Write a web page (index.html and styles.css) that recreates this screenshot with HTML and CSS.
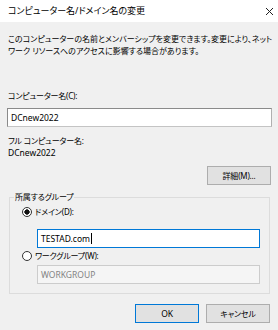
FILE: index.html
```html
<!DOCTYPE html>
<html lang="ja">
<head>
    <meta charset="UTF-8">
    <title>コンピューター名/ドメイン名の変更</title>
    <link rel="stylesheet" href="styles.css">
</head>
<body>
<div class="dlg">
    <div class="dlg-title">
        <span>コンピューター名/ドメイン名の変更</span>
        <svg class="dlg-close" width="9" height="9" viewBox="0 0 9 9">
            <path d="M1 1L8 8M8 1L1 8" stroke="#222" stroke-width="1" fill="none"/>
        </svg>
    </div>
    <div class="dlg-body">
        <p class="desc">このコンピューターの名前とメンバーシップを変更できます。変更により、ネット<br>ワーク リソースへのアクセスに影響する場合があります。</p>

        <div class="lbl lbl-name">コンピューター名(C):</div>
        <div class="txt txt-name lat">DCnew2022</div>

        <div class="lbl lbl-full">フル コンピューター名:</div>
        <div class="lbl lat">DCnew2022</div>

        <div class="btn-row">
            <button class="btn">詳細(M)...</button>
        </div>

        <fieldset class="grp">
            <legend>所属するグループ</legend>
            <label class="radio radio-1"><span class="dot on"></span>ドメイン(D):</label>
            <div class="txt txt-in txt-focus lat">TESTAD.com<span class="caret"></span></div>
            <label class="radio radio-2"><span class="dot"></span>ワークグループ(W):</label>
            <div class="txt txt-in txt-off lat">WORKGROUP</div>
        </fieldset>

        <div class="btn-row foot">
            <button class="btn btn-def lat">OK</button>
            <button class="btn">キャンセル</button>
        </div>
    </div>
</div>
</body>
</html>
```
FILE: styles.css
```css
body {
    margin: 0;
}

.dlg {
    width: 278px;
    height: 330px;
    background: #f0f0f0;
    font-family: "Noto Sans", "Noto Sans CJK JP", sans-serif;
    font-size: 8px;
    letter-spacing: -0.2px;
    font-feature-settings: "palt";
    color: #000;
    overflow: hidden;
}

.lat {
    font-size: 8.5px;
    letter-spacing: 0;
}

.dlg-title {
    height: 22px;
    background: #fff;
    display: flex;
    align-items: center;
    justify-content: space-between;
    padding: 0 4px 0 8px;
    line-height: 12px;
    font-size: 9px;
    letter-spacing: 0;
}

.dlg-close {
    display: block;
}

.dlg-body {
    padding: 11px 7px 0 8px;
}

.desc {
    margin: 0;
    line-height: 12px;
    letter-spacing: 0;
    white-space: nowrap;
}

.lbl {
    line-height: 12px;
}

.lbl-name {
    margin-top: 33px;
}

.lbl-full {
    margin-top: 8px;
}

.txt {
    box-sizing: border-box;
    height: 19px;
    line-height: 17px;
    padding: 0 3px;
    background: #fff;
    border: 1px solid #8a8a8a;
    border-bottom-color: #c4c4c4;
    border-right-color: #b0b0b0;
}

.txt-name {
    margin: 6px 0 0 -1px;
    width: 265px;
}

.btn-row {
    display: flex;
    justify-content: flex-end;
    gap: 7px;
    margin-top: 7px;
}

.btn {
    box-sizing: border-box;
    width: 64px;
    height: 19px;
    padding: 0;
    font: inherit;
    letter-spacing: inherit;
    font-feature-settings: "palt";
    background: #e1e1e1;
    border: 1px solid #adadad;
    color: #000;
}

.btn.lat {
    font-size: 8.5px;
}

.btn-def {
    border-color: #0078d7;
}

.grp {
    margin: 6px 1px 0 1px;
    padding: 0 0 9px 0;
    border: 1px solid #dcdcdc;
}

.grp legend {
    margin-left: 4px;
    padding: 0 1px;
    line-height: 12px;
}

.radio {
    display: flex;
    align-items: center;
    line-height: 12px;
    margin-left: 12px;
}

.radio-1 {
    margin-top: 3px;
}

.radio-2 {
    margin-top: 2px;
}

.dot {
    box-sizing: border-box;
    width: 10px;
    height: 10px;
    border: 1px solid #333;
    border-radius: 50%;
    background: #fff;
    margin-right: 3px;
}

.dot.on {
    background: radial-gradient(circle, #111 0 2.4px, #fff 2.9px);
}

.txt-in {
    width: 223px;
    margin-left: 27px;
}

.txt-focus {
    margin-top: 11px;
    border-color: #0078d7;
    display: flex;
    align-items: center;
}

.caret {
    display: inline-block;
    width: 1px;
    height: 11px;
    background: #000;
    margin-left: 1px;
}

.txt-off {
    margin-top: 3px;
    background: #f5f5f5;
    border-color: #cccccc;
    color: #838383;
}

.foot {
    margin-top: 10px;
    margin-right: 1px;
}
```
